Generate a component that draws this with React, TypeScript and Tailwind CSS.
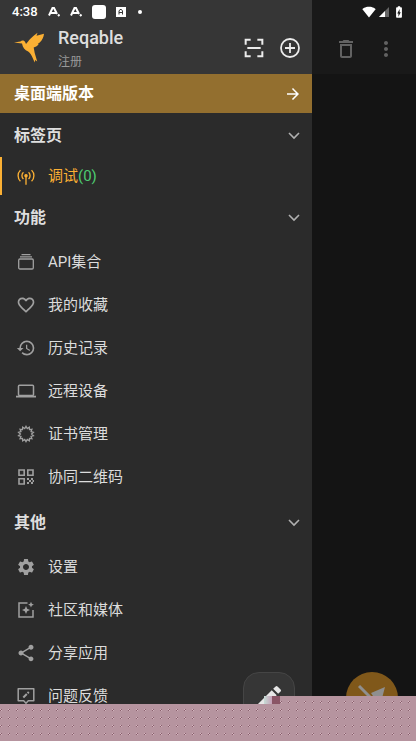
import { ReactNode } from "react";
import { MdSettings, MdShare, MdHistory, MdOutlineDeleteOutline, MdMoreVert, MdFavoriteBorder, MdArrowForward, MdEdit, MdSignalWifi4Bar, MdBatteryChargingFull } from "react-icons/md";

const Line = ({ children, w = 1.5, className = "size-[18px]" }: { children: ReactNode; w?: number; className?: string }) => (
  <svg viewBox="0 0 18 18" className={className} fill="none" stroke="currentColor" strokeWidth={w} aria-hidden="true">
    {children}
  </svg>
);

const points = Array.from({ length: 28 }, (_, i) => {
  const r = i % 2 ? 5.6 : 7.6;
  const a = (i * Math.PI) / 14;
  return `${(9 + r * Math.sin(a)).toFixed(2)},${(9 - r * Math.cos(a)).toFixed(2)}`;
}).join(" ");

const features: { label: string; icon: ReactNode }[] = [
  {
    label: "API集合",
    icon: <Line w={1.3}><rect x="1.7" y="6" width="14.600" height="10" rx="1.2" /><path d="M3 3.900h12M4.500 1.700h9" /></Line>,
  },
  { label: "我的收藏", icon: <MdFavoriteBorder className="size-5" /> },
  { label: "历史记录", icon: <MdHistory className="size-5" /> },
  {
    label: "远程设备",
    icon: <Line className="h-[18px] w-5"><rect x="1.5" y="3.200" width="15" height="10.300" rx="1" /><path d="M-1 14.600h20" strokeWidth="1.800" /></Line>,
  },
  { label: "证书管理", icon: <Line w={1.3}><polygon points={points} /></Line> },
  {
    label: "协同二维码",
    icon: (
      <Line w={1.6}>
        <path d="M2 2h5.200v5.200H2zM10.800 2H16v5.200h-5.200zM2 10.800h5.200V16H2z" />
        <path d="M10 10h2v2h-2zM14 10h2v2h-2zM12 12h2v2h-2zM10 14h2v2h-2zM14 14h2v2h-2zM15.500 12h1.500v2h-1.500z" fill="currentColor" stroke="none" />
      </Line>
    ),
  },
];

const others: { label: string; icon: ReactNode }[] = [
  { label: "设置", icon: <MdSettings className="size-5" /> },
  {
    label: "社区和媒体",
    icon: (
      <Line>
        <path d="M10.500 2H2v14h14v-7" />
        <path d="M9 5l1.200 2.800 2.800 1.200-2.800 1.200-1.200 2.800-1.200-2.800-2.800-1.200 2.800-1.200zM14 .8l.9 2 2 .9-2 .9-.9 2-.9-2-2-.9 2-.9z" fill="currentColor" stroke="none" />
      </Line>
    ),
  },
  { label: "分享应用", icon: <MdShare className="size-5" /> },
  {
    label: "问题反馈",
    icon: <Line><path d="M1.200 1.800h15.600v12h-5.500L9 16.200l-2.300-2.400H1.200z" strokeLinejoin="round" /><path d="M6.300 10.500l3.500-3.500M10.600 6.200l1.200-1.200" strokeWidth="2" /></Line>,
  },
];

function Section({ title, children }: { title: string; children: ReactNode }) {
  return (
    <section>
      <button className="flex h-11 w-full items-center justify-between pt-0.5 pr-3 pl-3.5">
        <h2 className="text-base font-bold text-[#dedede]">{title}</h2>
        <svg viewBox="0 0 12 12" className="size-3" fill="none" stroke="#b0b0b0" strokeWidth="1.600" aria-hidden="true">
          <path d="M1 3l5 5 5-5" />
        </svg>
      </button>
      {children}
    </section>
  );
}

function Items({ items }: { items: { label: string; icon: ReactNode }[] }) {
  return (
    <ul className="pt-px pb-0.5">
      {items.map((item) => (
        <li key={item.label}>
          <button className="flex h-[43px] w-full items-center gap-3 pt-px pl-4 text-left text-[#dcdcdc]">
            <span className="flex w-5 justify-center text-[#a0a0a0]">{item.icon}</span>
            {item.label}
          </button>
        </li>
      ))}
    </ul>
  );
}

const Noise = ({ id }: { id: string }) => (
  <svg className="size-full" aria-hidden="true">
    <defs>
      <pattern id={id} width="8" height="8" patternUnits="userSpaceOnUse">
        <rect width="8" height="8" fill="#b6949f" />
        <path d="M1 5h1v1H1zM0 6h1v1H0z" fill="#8a5f6d" />
        <path d="M0 5h1v1H0zM1 6h1v1H1z" fill="#d3b6bf" />
      </pattern>
    </defs>
    <rect width="100%" height="100%" fill={`url(#${id})`} />
  </svg>
);

export default function App() {
  return (
    <div className="relative flex h-screen overflow-hidden bg-[#141414] font-[Roboto,'Noto_Sans_CJK_SC',sans-serif] text-[15px]">
      <aside className="w-3/4 overflow-hidden bg-[#2b2b2b]">
        <header className="h-[74px] bg-[#363636]">
          <div className="flex h-6 items-center gap-2.5 pl-3 text-[13px] font-medium text-white">
            <span>4:38</span>
            {[0, 1].map((n) => (
              <svg key={n} viewBox="0 0 12 12" className="size-3" fill="none" stroke="white" strokeWidth="2" aria-hidden="true">
                <path d="M1 9.500L4.500 2h1.500l3 6M3 7h5M10 10l1.500-1.500" />
              </svg>
            ))}
            <span className="size-3.5 rounded-[3px] bg-white" />
            <svg viewBox="0 0 10 10" className="size-2.5" aria-hidden="true">
              <path d="M0 0h10v10H0z" fill="white" />
              <path d="M3 7.500V4l1-1.500h1.500l1 1.500v3.500M3 5.500h3.500" fill="none" stroke="#363636" />
            </svg>
            <span className="ml-0.5 size-1 rounded-full bg-white" />
          </div>
          <div className="flex items-center pt-0.5 pr-3 pl-3.5">
            <svg viewBox="0 0 32 32" className="size-8" fill="#fbb034" aria-hidden="true">
              <path d="M0 10.600l6.500-1c1-1.600 3.300-1.600 4.500.2l1 2.200c3-3.500 5-6.500 11.500-11.200l-1 3 7.500-2c-.3 3.500-1.800 6.500-4.300 8.700l-2 1.500 1 .2c-1.500 2-3.500 2.800-5 3.300l1 5.500 2.500 8.500-2-1.500-.5 2.500-2-4.500c-1.200-3-2.500-5-4.500-6.500-3.500-1.500-5.500-4-6.200-8z" />
            </svg>
            <div className="flex-1 pl-3">
              <h1 className="text-lg leading-6 font-medium text-[#dedede]">Reqable</h1>
              <a href="#register" className="block pt-1 text-xs leading-4 text-[#999]">注册</a>
            </div>
            <button aria-label="扫码" className="mr-4 text-[#ececec]">
              <Line w={1.8} className="size-5"><path d="M1.500 6V1.500H6M12 1.500h4.500V6M16.500 12v4.500H12M6 16.500H1.500V12M3 9h12" /></Line>
            </button>
            <button aria-label="添加" className="text-[#ececec]">
              <Line w={1.6} className="size-5"><circle cx="9" cy="9" r="8.100" /><path d="M4.500 9h9M9 4.500v9" /></Line>
            </button>
          </div>
        </header>
        <button className="flex h-[39px] w-full items-center justify-between bg-[#936f2f] pr-2.5 pl-3.5 text-base font-bold text-white">
          桌面端版本
          <MdArrowForward className="size-[18px]" />
        </button>
        <Section title="标签页">
          <button className="flex h-[38px] w-full items-center gap-3 border-l-2 border-[#fbb034] pt-px pl-3.5 text-[#fbb034]">
            <Line w={1.2} className="size-5"><circle cx="9" cy="7.800" r="1" fill="currentColor" /><path d="M9 8v8M6.700 10.800a4 4 0 0 1 0-6M11.300 10.800a4 4 0 0 0 0-6M4 12.800a7 7 0 0 1 0-10M14 12.800a7 7 0 0 0 0-10" /></Line>
            <span>调试<span className="text-[#4ecb71]">(0)</span></span>
          </button>
        </Section>
        <Section title="功能"><Items items={features} /></Section>
        <Section title="其他"><Items items={others} /></Section>
      </aside>
      <main className="flex-1">
        <header className="h-[74px] bg-[#191919]">
          <div className="flex h-6 items-center justify-end gap-0.5 pr-2.5 text-white">
            <MdSignalWifi4Bar className="size-3.5" />
            <svg viewBox="0 0 12 12" className="size-3" aria-hidden="true"><path d="M1 11L11 1v10z" fill="#666" /><path d="M1 11l6-6v6z" fill="white" /></svg>
            <MdBatteryChargingFull className="size-3.5" />
          </div>
          <div className="flex h-12 items-center justify-end gap-4 pt-0.5 pr-[18px] text-[#626262]">
            <button aria-label="删除"><MdOutlineDeleteOutline className="size-6" /></button>
            <button aria-label="更多"><MdMoreVert className="size-6" /></button>
          </div>
        </header>
      </main>
      <button aria-label="编辑" className="absolute bottom-[17px] left-[243px] flex size-[52px] items-center justify-center rounded-2xl border border-[#454545] bg-[#363636] text-[#e6e6e6]">
        <MdEdit className="size-8" />
      </button>
      <button aria-label="发送" className="absolute right-[18px] bottom-[17px] flex size-[52px] items-center justify-center rounded-full bg-[#80581a] text-[#8f8f8f]">
        <svg viewBox="0 0 28 28" className="size-7" aria-hidden="true"><path d="M1 2l12 12" stroke="currentColor" strokeWidth="3" /><path d="M27 3L13 9l2 3-3 4 2 3 4-4 5 3z" fill="currentColor" /></svg>
      </button>
      <div className="absolute inset-x-0 bottom-0 h-[37px]"><Noise id="wide" /></div>
      <div className="absolute right-0 bottom-[37px] left-[280px] h-2"><Noise id="step" /></div>
      <div className="absolute bottom-[37px] left-[264px] flex h-2 w-4">
        <span className="flex-1 bg-linear-to-r from-[#c5dcd5] to-[#c5a0b8]" />
        <span className="flex-1 bg-[#8a5566]" />
      </div>
    </div>
  );
}
